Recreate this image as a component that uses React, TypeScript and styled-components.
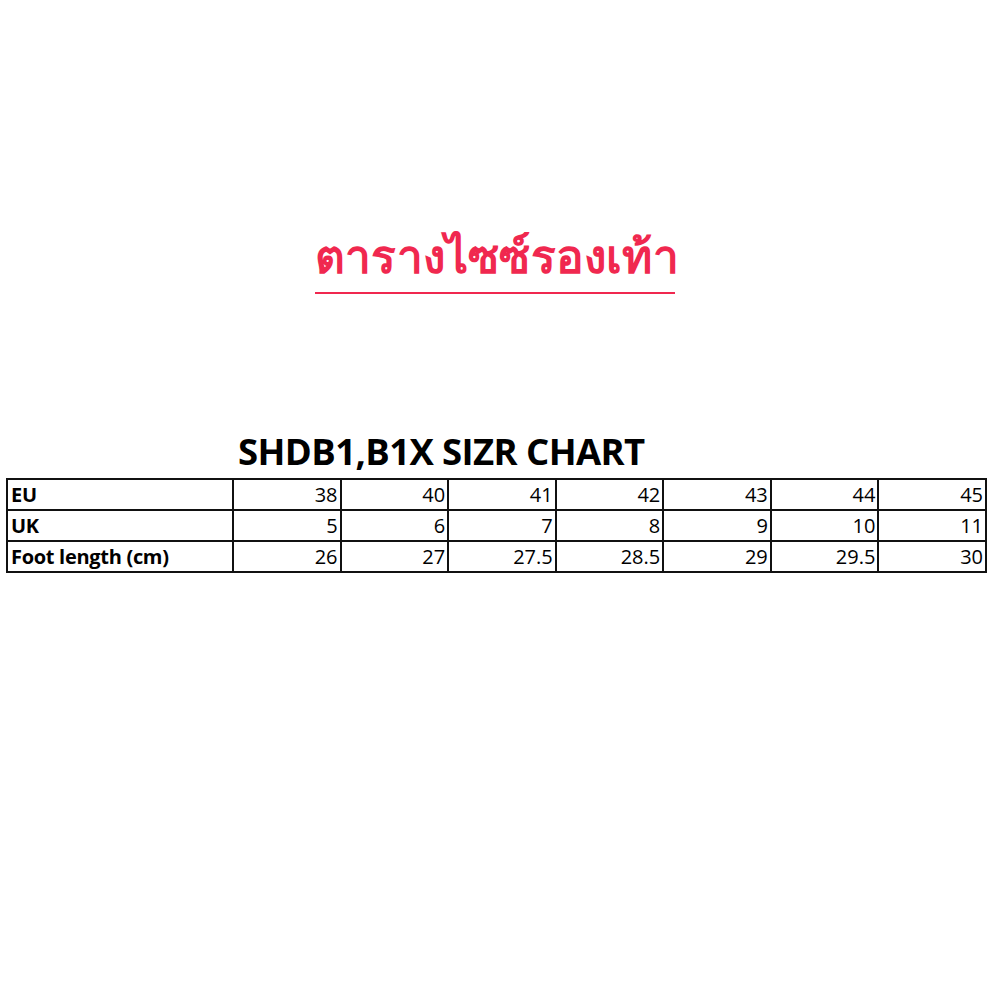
import React from "react";
import styled, { createGlobalStyle } from "styled-components";

const GlobalStyle = createGlobalStyle`
  html, body {
    margin: 0;
    padding: 0;
    background: #ffffff;
  }
  body {
    font-family: "Open Sans", "Liberation Sans", sans-serif;
  }
`;

const Page = styled.div`
  width: 1000px;
  height: 1000px;
  display: flex;
  flex-direction: column;
  align-items: flex-start;
`;

const TitleWrap = styled.div`
  margin: 222px 0 0 315px;
  display: flex;
  flex-direction: column;
`;

const Title = styled.h1`
  margin: 0;
  font-family: "Noto Sans", "DejaVu Sans", sans-serif;
  font-weight: 600;
  font-size: 46px;
  line-height: 66px;
  color: #f0284f;
  letter-spacing: 0.2px;
`;

const Underline = styled.div`
  width: 360px;
  height: 2px;
  background: #f0284f;
  margin-top: 4px;
`;

const ChartTitle = styled.h2`
  margin: 134px 0 0 238px;
  font-family: "Open Sans", "Liberation Sans", sans-serif;
  font-weight: 700;
  font-size: 36.5px;
  line-height: 46px;
  color: #000;
  letter-spacing: -0.6px;
`;

const Table = styled.table`
  margin: 4px 0 0 6px;
  border-collapse: collapse;
  table-layout: fixed;
  width: 981px;
  font-family: "Open Sans", "Liberation Sans", sans-serif;
  font-size: 20px;
  color: #000;
`;

const Cell = styled.td<{ $head?: boolean }>`
  border: 2px solid #111;
  height: 29px;
  padding: 0 2px 0 3px;
  line-height: 29px;
  text-align: ${(p) => (p.$head ? "left" : "right")};
  font-weight: ${(p) => (p.$head ? 700 : 400)};
  letter-spacing: ${(p) => (p.$head ? "-0.3px" : "0")};
  width: ${(p) => (p.$head ? "219px" : "auto")};
  white-space: nowrap;
`;

const rows: { label: string; values: string[] }[] = [
  { label: "EU", values: ["38", "40", "41", "42", "43", "44", "45"] },
  { label: "UK", values: ["5", "6", "7", "8", "9", "10", "11"] },
  {
    label: "Foot length (cm)",
    values: ["26", "27", "27.5", "28.5", "29", "29.5", "30"],
  },
];

export default function App() {
  return (
    <Page>
      <GlobalStyle />
      <TitleWrap>
        <Title>ตารางไซซ์รองเท้า</Title>
        <Underline />
      </TitleWrap>
      <ChartTitle>SHDB1,B1X SIZR CHART</ChartTitle>
      <Table>
        <tbody>
          {rows.map((r) => (
            <tr key={r.label}>
              <Cell $head>{r.label}</Cell>
              {r.values.map((v, i) => (
                <Cell key={i}>{v}</Cell>
              ))}
            </tr>
          ))}
        </tbody>
      </Table>
    </Page>
  );
}
